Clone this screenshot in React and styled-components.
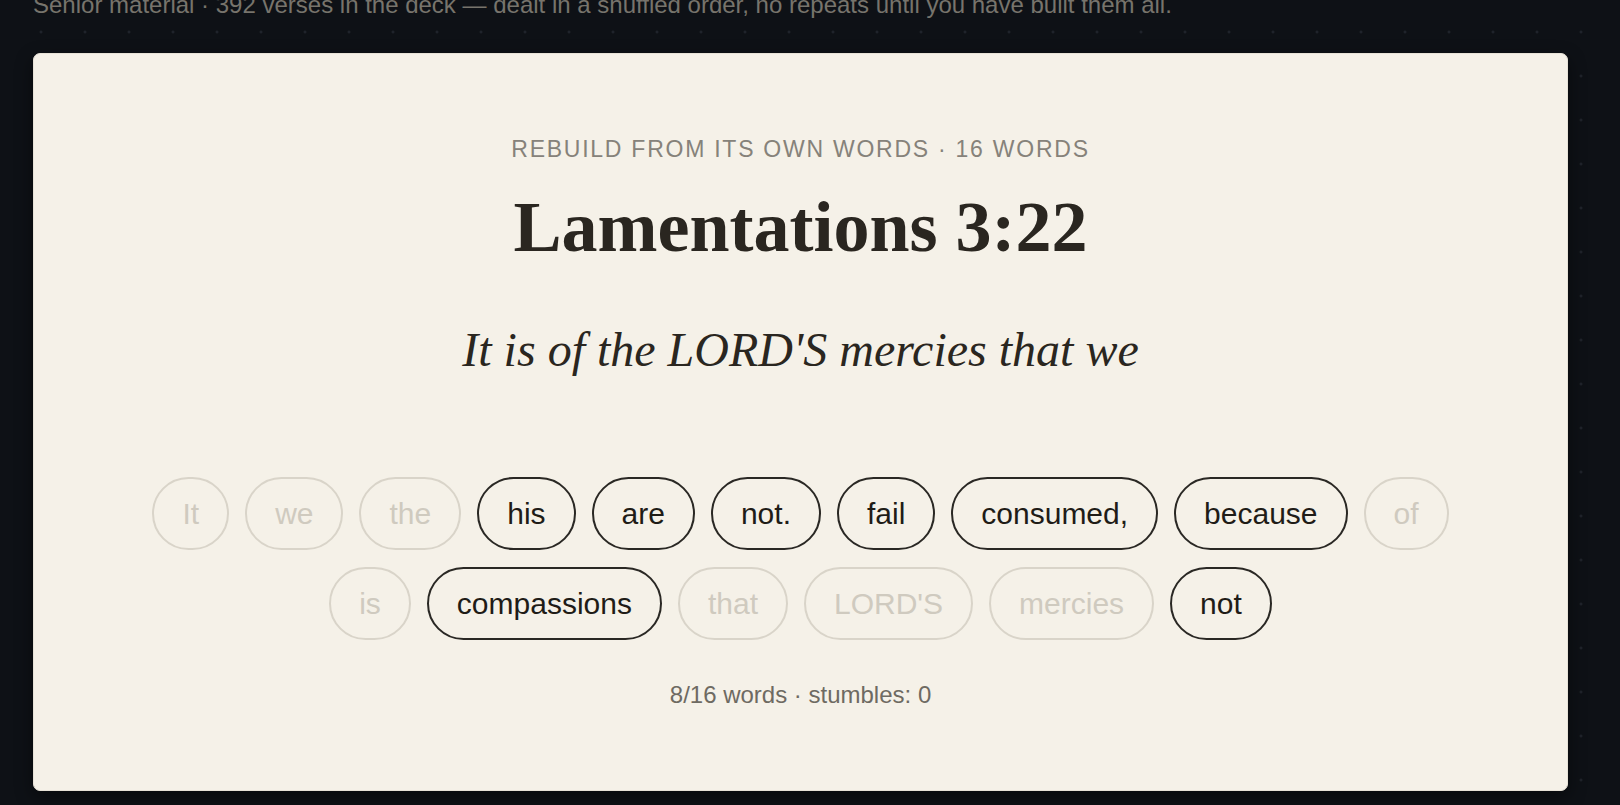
import React, { useState } from 'react';
import styled, { createGlobalStyle } from 'styled-components';

const GlobalStyle = createGlobalStyle`
  html, body {
    margin: 0;
    padding: 0;
    background-color: #0e1116;
    background-image: radial-gradient(circle, #1f232b 1.1px, transparent 1.8px);
    background-size: 44px 44px;
    background-position: 19px 10px;
    font-family: "Liberation Sans", Arial, sans-serif;
    min-height: 100vh;
  }
`;

const Page = styled.div`
  padding: 0 52px 40px 33px;
`;

const Intro = styled.p`
  margin: -12px 0 32px;
  font-size: 24px;
  line-height: 33px;
  color: #77746c;
`;

const Card = styled.section`
  background: #f5f1e8;
  border: 1px solid #e7e2d7;
  border-radius: 7px;
  box-shadow: 0 6px 18px rgba(0, 0, 0, 0.45);
  padding: 81px 40px 81px;
  display: flex;
  flex-direction: column;
  align-items: center;
  text-align: center;
`;

const Label = styled.div`
  font-size: 23px;
  line-height: 28px;
  letter-spacing: 1.75px;
  text-transform: uppercase;
  color: #86827a;
`;

const Reference = styled.h1`
  margin: 25px 0 0;
  font-family: "Liberation Serif", "Times New Roman", serif;
  font-weight: 700;
  font-size: 72px;
  line-height: 79px;
  color: #2a2620;
`;

const Verse = styled.p`
  margin: 49px 0 0;
  font-family: "Liberation Serif", "Times New Roman", serif;
  font-style: italic;
  font-size: 48px;
  line-height: 67px;
  color: #2a2620;
`;

const Tray = styled.div`
  margin-top: 94px;
  max-width: 1340px;
  display: flex;
  flex-wrap: wrap;
  justify-content: center;
  gap: 17px 16px;
`;

const Chip = styled.button`
  font-family: "Liberation Sans", Arial, sans-serif;
  font-size: 30px;
  line-height: 36px;
  padding: 16.5px 28px;
  border-radius: 999px;
  background: transparent;
  border: 2px solid ${(p) => (p.$used ? '#d9d4c9' : '#2a2824')};
  color: ${(p) => (p.$used ? '#cfcabf' : '#1f1c17')};
  cursor: ${(p) => (p.$used ? 'default' : 'pointer')};
`;

const Tally = styled.div`
  margin-top: 41px;
  font-size: 24px;
  line-height: 28px;
  color: #6e6a62;
`;

const startingTray = [
  { word: 'It', used: true },
  { word: 'we', used: true },
  { word: 'the', used: true },
  { word: 'his', used: false },
  { word: 'are', used: false },
  { word: 'not.', used: false },
  { word: 'fail', used: false },
  { word: 'consumed,', used: false },
  { word: 'because', used: false },
  { word: 'of', used: true },
  { word: 'is', used: true },
  { word: 'compassions', used: false },
  { word: 'that', used: true },
  { word: "LORD'S", used: true },
  { word: 'mercies', used: true },
  { word: 'not', used: false },
];

export default function App() {
  const [tray, setTray] = useState(startingTray);
  const [built, setBuilt] = useState(["It", "is", "of", "the", "LORD'S", "mercies", "that", "we"]);

  const pick = (index) => {
    if (tray[index].used) return;
    setBuilt([...built, tray[index].word]);
    setTray(tray.map((t, i) => (i === index ? { ...t, used: true } : t)));
  };

  return (
    <>
      <GlobalStyle />
      <Page>
        <Intro>
          Senior material · 392 verses in the deck — dealt in a shuffled order, no repeats until you have built them all.
        </Intro>
        <Card>
          <Label>Rebuild from its own words · {tray.length} words</Label>
          <Reference>Lamentations 3:22</Reference>
          <Verse>{built.join(' ')}</Verse>
          <Tray>
            {tray.map((t, i) => (
              <Chip key={i} $used={t.used} onClick={() => pick(i)}>
                {t.word}
              </Chip>
            ))}
          </Tray>
          <Tally>{built.length}/{tray.length} words · stumbles: 0</Tally>
        </Card>
      </Page>
    </>
  );
}
